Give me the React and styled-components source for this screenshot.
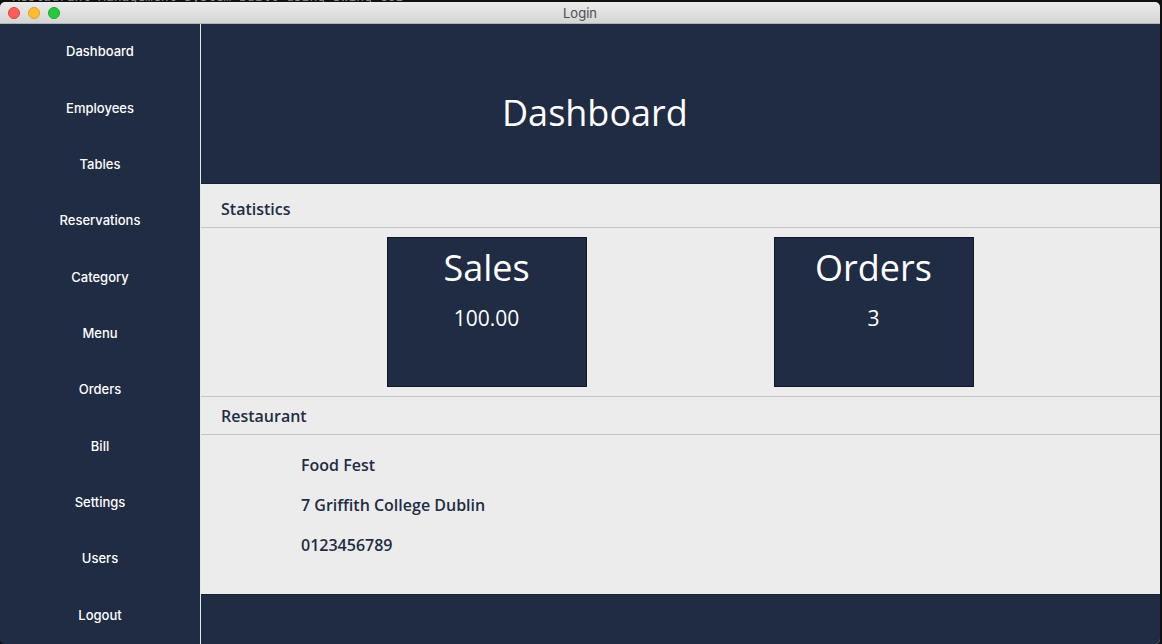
import React from "react";
import styled, { createGlobalStyle } from "styled-components";

const GlobalStyle = createGlobalStyle`
  html, body {
    margin: 0;
    padding: 0;
    background: #0e0e0e;
    overflow: hidden;
  }
  #root {
    width: 1162px;
    height: 644px;
  }
`;

const NAVY = "#1f2c44";
const LIGHT = "#ececec";

const Desktop = styled.div`
  width: 1162px;
  height: 644px;
  background: #101010;
  display: flex;
  flex-direction: column;
`;

const DesktopStrip = styled.div`
  height: 2px;
  overflow: hidden;
  padding-left: 12px;
  font-family: "DejaVu Sans Mono", monospace;
  font-size: 13px;
  line-height: 13px;
  color: #8a8a8a;
  white-space: nowrap;

  span {
    display: block;
    margin-top: -10px;
  }
`;

const Window = styled.div`
  width: 1160px;
  flex: 1;
  display: flex;
  flex-direction: column;
  border-radius: 5px;
  overflow: hidden;
  background: ${NAVY};
`;

const TitleBar = styled.div`
  height: 21px;
  flex: none;
  border-bottom: 1px solid #b3b3b3;
  background: linear-gradient(#ebebeb, #d5d5d5);
  position: relative;
  display: flex;
  align-items: center;
  justify-content: center;
  font-family: Inter, "Liberation Sans", sans-serif;
  font-size: 13px;
  color: #4d4d4d;
`;

const Lights = styled.div`
  position: absolute;
  left: 8px;
  top: 5px;
  display: flex;
  gap: 8px;
`;

const Light = styled.span`
  width: 12px;
  height: 12px;
  border-radius: 50%;
  box-sizing: border-box;
  background: ${(p) => p.$color};
  border: 0.5px solid ${(p) => p.$edge};
`;

const Body = styled.div`
  flex: 1;
  display: flex;
  min-height: 0;
`;

const Sidebar = styled.nav`
  width: 200px;
  flex: none;
  border-right: 1px solid #e6e6e6;
  background: ${NAVY};
  display: grid;
  grid-template-rows: repeat(11, 1fr);
`;

const NavItem = styled.div`
  display: flex;
  align-items: center;
  justify-content: center;
  padding-bottom: 2px;
  font-family: Inter, "Liberation Sans", sans-serif;
  font-size: 13px;
  font-weight: 500;
  color: #ffffff;
`;

const Main = styled.main`
  flex: 1;
  display: flex;
  flex-direction: column;
  background: ${LIGHT};
  font-family: "Open Sans", "DejaVu Sans", sans-serif;
`;

const Header = styled.header`
  height: 160px;
  flex: none;
  box-sizing: border-box;
  background: ${NAVY};
  border-bottom: 1px solid #172134;
  padding: 71px 0 0 301px;
`;

const PageTitle = styled.h1`
  margin: 0;
  font-size: 36px;
  font-weight: 400;
  line-height: 36px;
  color: #ffffff;
`;

const SectionHeader = styled.div`
  height: ${(p) => p.$h}px;
  flex: none;
  box-sizing: border-box;
  border-bottom: 1px solid #c6c6c6;
  padding: ${(p) => p.$top}px 0 0 20px;
  font-size: 16px;
  font-weight: 600;
  line-height: 16px;
  color: ${NAVY};
`;

const StatsRow = styled.div`
  height: 169px;
  flex: none;
  box-sizing: border-box;
  border-bottom: 1px solid #c6c6c6;
  display: flex;
  justify-content: center;
  align-items: flex-start;
  gap: 187px;
  padding-top: 9px;
  padding-right: 1px;
`;

const StatCard = styled.div`
  width: 200px;
  height: 150px;
  box-sizing: border-box;
  background: ${NAVY};
  border: 1px solid #101827;
  display: flex;
  flex-direction: column;
  align-items: center;
  padding-top: 12px;
  color: #ffffff;
`;

const StatTitle = styled.div`
  font-size: 36px;
  line-height: 36px;
  font-weight: 400;
`;

const StatValue = styled.div`
  margin-top: 22px;
  font-size: 21px;
  line-height: 21px;
  font-weight: 500;
`;

const InfoBlock = styled.div`
  flex: 1;
  display: flex;
  flex-direction: column;
  gap: 24px;
  padding: 22px 0 0 100px;
  font-size: 16px;
  font-weight: 600;
  line-height: 16px;
  color: ${NAVY};
`;

const Footer = styled.footer`
  height: 50px;
  flex: none;
  box-sizing: border-box;
  background: ${NAVY};
  border-top: 1px solid #172134;
`;

const navItems = [
  "Dashboard",
  "Employees",
  "Tables",
  "Reservations",
  "Category",
  "Menu",
  "Orders",
  "Bill",
  "Settings",
  "Users",
  "Logout",
];

const stats = [
  { title: "Sales", value: "100.00" },
  { title: "Orders", value: "3" },
];

const info = ["Food Fest", "7 Griffith College Dublin", "0123456789"];

export default function App() {
  return (
    <>
      <GlobalStyle />
      <Desktop>
        <DesktopStrip>
          <span>Restaurant Management System built using Swing GUI</span>
        </DesktopStrip>
        <Window>
          <TitleBar>
            <Lights>
              <Light $color="#fe5f57" $edge="#e0443e" />
              <Light $color="#febc2e" $edge="#dea123" />
              <Light $color="#28c840" $edge="#1aab29" />
            </Lights>
            Login
          </TitleBar>
          <Body>
            <Sidebar>
              {navItems.map((n) => (
                <NavItem key={n}>{n}</NavItem>
              ))}
            </Sidebar>
            <Main>
              <Header>
                <PageTitle>Dashboard</PageTitle>
              </Header>
              <SectionHeader $h={44} $top={17}>
                Statistics
              </SectionHeader>
              <StatsRow>
                {stats.map((s) => (
                  <StatCard key={s.title}>
                    <StatTitle>{s.title}</StatTitle>
                    <StatValue>{s.value}</StatValue>
                  </StatCard>
                ))}
              </StatsRow>
              <SectionHeader $h={38} $top={11}>
                Restaurant
              </SectionHeader>
              <InfoBlock>
                {info.map((i) => (
                  <div key={i}>{i}</div>
                ))}
              </InfoBlock>
              <Footer />
            </Main>
          </Body>
        </Window>
      </Desktop>
    </>
  );
}
